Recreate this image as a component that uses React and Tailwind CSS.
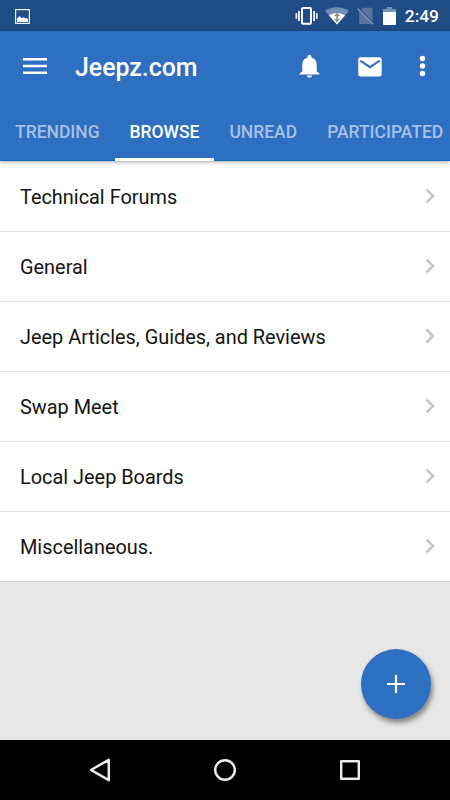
const TABS = ['Trending', 'Browse', 'Unread', 'Participated'];

const FORUMS = [
  'Technical Forums',
  'General',
  'Jeep Articles, Guides, and Reviews',
  'Swap Meet',
  'Local Jeep Boards',
  'Miscellaneous.'
];

function StatusBar() {
  return (
    <div className="flex h-[31px] items-center bg-[#204c86] text-white">
      <svg className="mt-px ml-[15px] h-[15px] w-[15px]" viewBox="0 0 15 15">
        <rect x="0.6" y="0.6" width="13.8" height="13.8" fill="none" stroke="#e9eef5" strokeWidth="1.2" />
        <path d="M2 13V9.500L4.500 7l2 2 2.500-.8 1.500 1.300L12 9l1 1v3z" fill="white" />
      </svg>

      <svg className="ml-auto h-[20px] w-[24px]" viewBox="0 0 24 20" fill="white">
        <rect x="7" y="2" width="9" height="15.800" rx="0.8" fill="none" stroke="white" strokeWidth="2" />
        <path d="M3 5h1.800v10H3zM.5 7.200h1.600v5.600H.5zM18.200 5H20v10h-1.800zM21 7.200h1.600v5.600H21z" />
      </svg>
      <svg className="ml-[6px] h-[18px] w-[24px]" viewBox="0 0 24 18">
        <path d="M12 17.500L0 4C3.500 1.500 7.500.3 12 .3S20.500 1.500 24 4z" fill="#6f8db5" />
        <path d="M12 17.500L4 8.500C6.300 6.900 9 6 12 6s5.700.9 8 2.500z" fill="white" />
        <path d="M12 5.800l3 3.200H9zM12 15.200l3-3.200H9z" fill="#8a8a82" />
        <path d="M11.200 8h1.600v5h-1.600z" fill="#8a8a82" />
      </svg>
      <svg className="ml-[8px] h-[18px] w-[18px]" viewBox="0 0 18 18">
        <path d="M6 .8h8.500a1 1 0 0 1 1 1V17H2.200V5z" fill="#57759f" />
        <path d="M2 1.800l15 15" stroke="#204c86" strokeWidth="1.500" />
        <path d="M.8 1.800l15.500 15.500" stroke="#7894ba" strokeWidth="1.500" />
      </svg>
      <svg className="ml-[8px] h-[20px] w-[13px]" viewBox="0 0 13 20">
        <path d="M4 1h5v2h4v4H0V3h4z" fill="#7691b7" />
        <path d="M0 6h13v12.200a.8.8 0 0 1-.8.800H.8a.8.8 0 0 1-.8-.8z" fill="white" />
      </svg>
      <span className="mr-[11px] ml-[9px] pt-[3px] text-[17.400px] leading-none font-medium">2:49</span>
    </div>
  );
}

function AppBar() {
  return (
    <div className="flex h-[70px] items-center text-white">
      <button type="button" aria-label="Menu" className="ml-[23px]">
        <svg className="h-[16px] w-[24px]" viewBox="0 0 24 16" fill="currentColor">
          <path d="M0 0h24v2.500H0zM0 6.700h24v2.500H0zM0 13.400h24v2.500H0z" />
        </svg>
      </button>
      <h1 className="ml-[28px] pt-[5px] text-[24.900px] leading-none font-medium">Jeepz.com</h1>
      <button type="button" aria-label="Notifications" className="ml-auto">
        <svg className="h-[24px] w-[21px]" viewBox="0 0 21 24" fill="currentColor">
          <path d="M10.500.8c1.100 0 1.900.8 1.900 1.900v.8c3.400.9 5.300 3.600 5.300 7.200v6.600l2.900 2.500v.8H.4v-.8l2.900-2.500v-6.600c0-3.600 1.900-6.300 5.300-7.200v-.8c0-1.100.8-1.900 1.900-1.900z" />
          <path d="M7.800 21.400h5.400c-.3 1.300-1.300 2.200-2.700 2.200s-2.400-.9-2.700-2.200z" />
        </svg>
      </button>
      <button type="button" aria-label="Messages" className="ml-[38px] pt-px">
        <svg className="h-[20px] w-[24px]" viewBox="0 0 24 20">
          <rect x="0.300" y="0.200" width="23.400" height="19.300" rx="2.200" fill="currentColor" />
          <path d="M2.300 3.700L12 10.200l9.700-6.500" fill="none" stroke="#2e6fc1" strokeWidth="2" />
        </svg>
      </button>
      <button type="button" aria-label="More" className="mr-[24px] ml-[37px]">
        <svg className="h-[22px] w-[7px]" viewBox="0 0 7 22" fill="currentColor">
          <circle cx="3.500" cy="3.500" r="2.700" />
          <circle cx="3.500" cy="11" r="2.700" />
          <circle cx="3.500" cy="18.500" r="2.700" />
        </svg>
      </button>
    </div>
  );
}

function Tabs({ active }) {
  return (
    <nav className="flex h-[60px] overflow-hidden shadow-[inset_0_-1px_0_#1467c2]">
      {TABS.map((tab) => (
        <button
          key={tab}
          type="button"
          className={`shrink-0 border-b-3 px-[15px] pt-[5px] text-[17.480px] font-medium uppercase ${
            tab === active ? 'border-white text-white' : 'border-transparent text-[#a6c1e5]'
          }`}
        >
          {tab}
        </button>
      ))}
    </nav>
  );
}

function ForumRow({ name }) {
  return (
    <li className="flex h-[70px] items-center justify-between border-b border-[#e4e4e4] bg-white pr-[15px] pl-5 text-[19.900px] text-[#141414] last:border-[#d4d4d4]">
      <span className="pt-[2px]">{name}</span>
      <svg className="mb-[2px] h-[16px] w-[10px]" viewBox="0 0 10 16" fill="none" stroke="#c6c6c6" strokeWidth="2.500">
        <path d="M1.500 1.500L8 8l-6.500 6.500" />
      </svg>
    </li>
  );
}

function NavigationBar() {
  return (
    <div className="flex h-[60px] items-center bg-black">
      <svg className="ml-[89px] h-[24px] w-[22px]" viewBox="0 0 22 24" fill="none" stroke="#ececec" strokeWidth="2.500" strokeLinejoin="round">
        <path d="M2 12L19.800 1.800v20.400z" />
      </svg>
      <svg className="ml-[103px] h-[22px] w-[22px]" viewBox="0 0 22 22" fill="none" stroke="#ececec" strokeWidth="2.400">
        <circle cx="11" cy="11" r="9.800" />
      </svg>
      <svg className="ml-[104px] h-[20px] w-[20px]" viewBox="0 0 20 20" fill="none" stroke="#ececec" strokeWidth="2.400" strokeLinejoin="round">
        <rect x="1.200" y="1.200" width="17.600" height="17.600" />
      </svg>
    </div>
  );
}

export default function App() {
  return (
    <div className="relative flex h-[800px] w-[450px] flex-col overflow-hidden bg-[#e7e7e7] font-['Roboto',sans-serif]">
      <StatusBar />
      <header className="relative z-10 bg-[#2e6fc1] shadow-[0_1px_4px_rgba(0,0,0,0.35)]">
        <AppBar />
        <Tabs active="Browse" />
      </header>
      <main className="flex-1">
        <ul className="bg-white pt-px">
          {FORUMS.map((name) => (
            <ForumRow key={name} name={name} />
          ))}
        </ul>
      </main>
      <NavigationBar />
      <button
        type="button"
        aria-label="New topic"
        className="absolute right-[19px] bottom-[81px] flex h-[70px] w-[70px] items-center justify-center rounded-full bg-[#2e6fc1] shadow-[2px_4px_5px_rgba(0,0,0,0.42)]"
      >
        <svg className="h-[18px] w-[18px]" viewBox="0 0 18 18" fill="white">
          <path d="M7.900 0h2.200v7.900H18v2.200h-7.900V18H7.900v-7.900H0V7.900h7.900z" />
        </svg>
      </button>
    </div>
  );
}
